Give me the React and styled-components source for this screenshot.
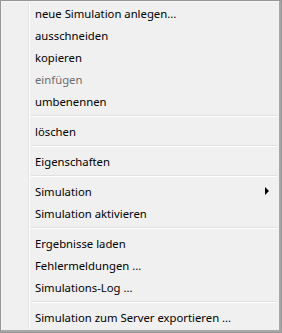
import React from 'react';
import styled, { createGlobalStyle } from 'styled-components';

const GlobalStyle = createGlobalStyle`
  html, body {
    margin: 0;
    padding: 0;
    background: #ffffff;
  }
`;

const Menu = styled.div`
  box-sizing: border-box;
  width: 282px;
  height: 333px;
  padding: 1px 3px 3px 2px;
  background: #f0f0f0;
  border: 1px solid #979797;
  box-shadow: inset -2px -2px 0 #a7a7a7, inset 1px 1px 0 #f5f5f5;
  font-family: "Noto Sans", "Open Sans", sans-serif;
  font-size: 11.3px;
  position: relative;
  display: flex;
  flex-direction: column;
`;

const Gutter = styled.div`
  position: absolute;
  top: 2px;
  bottom: 3px;
  left: 27px;
  width: 1px;
  background: #e2e3e3;
  border-right: 1px solid #ffffff;
`;

const Item = styled.div`
  height: 22px;
  display: flex;
  align-items: center;
  justify-content: space-between;
  padding-left: 32px;
  padding-right: 9px;
  color: ${({ disabled }) => (disabled ? '#6d6d6d' : '#000000')};
  white-space: nowrap;
`;

const Separator = styled.div`
  height: 8px;
  display: flex;
  flex-direction: column;
  justify-content: center;
  padding-left: 28px;
  padding-right: 1px;

  &::before {
    content: '';
    height: 1px;
    background: #e0e0e0;
    border-bottom: 1px solid #ffffff;
  }
`;

const Arrow = styled.span`
  width: 0;
  height: 0;
  border-top: 4px solid transparent;
  border-bottom: 4px solid transparent;
  border-left: 4px solid #000000;
`;

const entries = [
  { label: 'neue Simulation anlegen...' },
  { label: 'ausschneiden' },
  { label: 'kopieren' },
  { label: 'einfügen', disabled: true },
  { label: 'umbenennen' },
  { sep: true },
  { label: 'löschen' },
  { sep: true },
  { label: 'Eigenschaften' },
  { sep: true },
  { label: 'Simulation', sub: true },
  { label: 'Simulation aktivieren' },
  { sep: true },
  { label: 'Ergebnisse laden' },
  { label: 'Fehlermeldungen ...' },
  { label: 'Simulations-Log ...' },
  { sep: true },
  { label: 'Simulation zum Server exportieren ...' },
];

const App = () => (
  <>
    <GlobalStyle />
    <Menu>
      <Gutter />
      {entries.map((e, i) => (e.sep ? (
        <Separator key={i} />
      ) : (
        <Item key={i} disabled={e.disabled}>
          <span>{e.label}</span>
          {e.sub && <Arrow />}
        </Item>
      )))}
    </Menu>
  </>
);

export default App;
